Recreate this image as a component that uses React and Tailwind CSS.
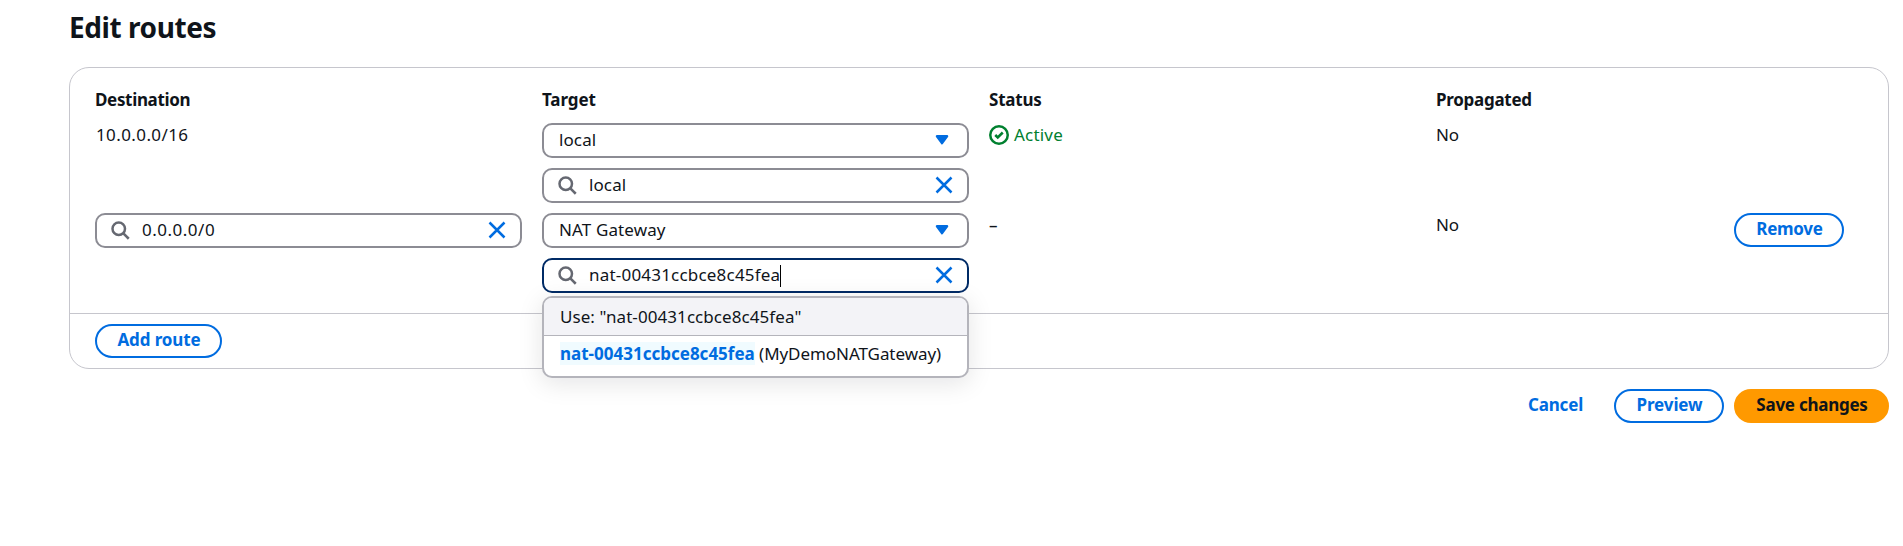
function SearchIcon() {
  return (
    <svg viewBox="0 0 16 16" className="size-5 shrink-0" fill="none" stroke="#656871" strokeWidth="2">
      <circle cx="7" cy="7" r="5" />
      <path d="m15 15-4.5-4.5" />
    </svg>
  );
}

function CloseIcon() {
  return (
    <svg viewBox="0 0 16 16" className="size-5 shrink-0" fill="none" stroke="#006ce0" strokeWidth="2">
      <path d="m2 2 12 12M14 2 2 14" />
    </svg>
  );
}

function CaretIcon() {
  return (
    <svg viewBox="0 0 16 16" className="size-5 shrink-0" fill="#006ce0" stroke="#006ce0" strokeWidth="2" strokeLinejoin="round">
      <path d="M4 5h8l-4 5.5L4 5z" />
    </svg>
  );
}

function CheckIcon() {
  return (
    <svg viewBox="0 0 16 16" className="size-5 shrink-0" fill="none" stroke="#00802f" strokeWidth="2">
      <circle cx="8" cy="8" r="7" />
      <path d="m5 8 2 2 4-4" />
    </svg>
  );
}

function SearchInput({ value, tracking, focused }) {
  return (
    <div
      className={`flex h-[35px] items-center rounded-[10px] border-2 bg-white pr-[13px] pl-[13px] ${
        focused ? 'border-[#002b66]' : 'border-[#8c8c94]'
      }`}
    >
      <span className="mb-[2px]">
        <SearchIcon />
      </span>
      <span className={`ml-3 pb-[3px] ${tracking}`}>{value}</span>
      {focused && <span className="h-[22px] w-px bg-black" />}
      <span className="mb-[2px] ml-auto">
        <CloseIcon />
      </span>
    </div>
  );
}

function Select({ value, tracking }) {
  return (
    <div className="flex h-[35px] items-center justify-between rounded-[10px] border-2 border-[#8c8c94] bg-white px-[15px]">
      <span className={`pb-[3px] ${tracking}`}>{value}</span>
      <span className="mb-px">
        <CaretIcon />
      </span>
    </div>
  );
}

function Button({ children, className }) {
  return (
    <button
      className={`flex h-[34px] items-center justify-center rounded-full border-2 pb-[3px] pl-px font-bold whitespace-nowrap ${className}`}
    >
      {children}
    </button>
  );
}

const rowGrid = 'grid grid-cols-[427px_427px_427px_278px_110px] gap-x-5';

export default function App() {
  return (
    <main className="h-[546px] overflow-hidden bg-white pr-[14px] pl-[69px] font-['Noto_Sans',sans-serif] text-[17px] leading-[25px] text-[#0f141a]">
      <h1 className="h-[67px] pt-[9px] text-[28px] leading-9 font-bold tracking-[-0.42px]">Edit routes</h1>

      <section className="h-[302px] rounded-[20px] border border-[#c6c6cd]">
        <div className="h-[245px] px-[25px] pt-[19px]">
          <div className={`${rowGrid} font-bold`}>
            <div className="tracking-[-0.34px]">Destination</div>
            <div className="tracking-[-0.1px]">Target</div>
            <div className="tracking-[-0.2px]">Status</div>
            <div className="tracking-[-0.28px]">Propagated</div>
          </div>

          <div className={`${rowGrid} mt-[11px] h-[90px]`}>
            <div className="-mt-px pl-px tracking-[0.4px]">10.0.0.0/16</div>
            <div className="flex flex-col gap-2.5">
              <Select value="local" tracking="tracking-[0.1px]" />
              <SearchInput value="local" tracking="tracking-[0.1px]" />
            </div>
            <div className="-mt-px flex h-[25px] items-center gap-[5px] text-[#00802f]">
              <CheckIcon />
              <span className="tracking-[0.2px]">Active</span>
            </div>
            <div className="-mt-px tracking-[-0.2px]">No</div>
          </div>

          <div className={`${rowGrid} items-start`}>
            <SearchInput value="0.0.0.0/0" tracking="tracking-[0.5px]" />
            <div className="relative flex flex-col gap-2.5">
              <Select value="NAT Gateway" tracking="tracking-[0.12px]" />
              <SearchInput value="nat-00431ccbce8c45fea" tracking="tracking-[0.2px]" focused />
              <div className="absolute top-[83px] left-0 h-[82px] w-full overflow-hidden rounded-[10px] border-2 border-[#b4b4bb] bg-white shadow-[0_5px_25px_1px_rgba(0,7,22,0.1)]">
                <div className="h-[38px] border-b border-[#b4b4bb] bg-[#f3f3f7] px-4 pt-[6px] tracking-[0.07px]">
                  Use: "nat-00431ccbce8c45fea"
                </div>
                <div className="px-4 pt-[5px] whitespace-nowrap">
                  <span className="bg-[#f0fbff] font-bold text-[#006ce0]">nat-00431ccbce8c45fea</span>
                  <span className="tracking-[-0.06px]"> (MyDemoNATGateway)</span>
                </div>
              </div>
            </div>
            <div className="-mt-px font-medium">–</div>
            <div className="-mt-px tracking-[-0.2px]">No</div>
            <Button className="w-[110px] border-[#006ce0] bg-white tracking-[-0.28px] text-[#006ce0]">Remove</Button>
          </div>
        </div>

        <div className="border-t border-[#c6c6cd] px-[25px] pt-2.5">
          <Button className="w-[127px] border-[#006ce0] bg-white tracking-[-0.12px] text-[#006ce0]">Add route</Button>
        </div>
      </section>

      <div className="mt-5 flex items-center justify-end gap-2.5">
        <Button className="w-[98px] border-transparent tracking-[-0.15px] text-[#006ce0]">Cancel</Button>
        <Button className="w-[110px] border-[#006ce0] bg-white tracking-[-0.1px] text-[#006ce0]">Preview</Button>
        <Button className="w-[155px] border-[#ff9900] bg-[#ff9900] tracking-[-0.25px] text-[#0f141a]">Save changes</Button>
      </div>
    </main>
  );
}
